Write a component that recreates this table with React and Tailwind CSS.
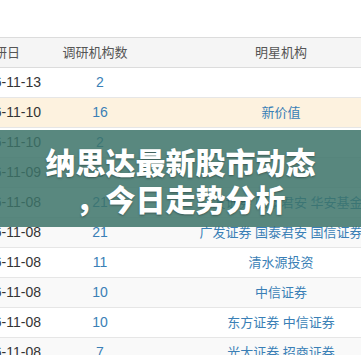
export default function App() {
  const rows = [
    { d: "2016-11-13", n: "2", s: "", bg: "bg-white" },
    { d: "2016-11-10", n: "16", s: "新价值", bg: "bg-[#fdf2df]" },
    { d: "2016-11-10", n: "2", s: "", bg: "bg-white" },
    { d: "2016-11-09", n: "3", s: "", bg: "bg-[#f9f9f9]" },
    { d: "2016-11-08", n: "21", s: "广发证券 国泰君安 华安基金", bg: "bg-white" },
    { d: "2016-11-08", n: "21", s: "广发证券 国泰君安 国信证券", bg: "bg-[#f9f9f9]" },
    { d: "2016-11-08", n: "11", s: "清水源投资", bg: "bg-white" },
    { d: "2016-11-08", n: "10", s: "中信证券", bg: "bg-[#f9f9f9]" },
    { d: "2016-11-08", n: "10", s: "东方证券 中信证券", bg: "bg-white" },
    { d: "2016-11-08", n: "7", s: "光大证券 招商证券", bg: "bg-[#f9f9f9]" },
  ];
  return (
    <div className="relative w-[361px] h-[361px] overflow-hidden bg-white font-['Liberation_Sans','Noto_Sans_CJK_SC',sans-serif] text-[13px]">
      <div className="h-[355px] overflow-hidden pt-[37px]">
        <div className="flex flex-col w-[482px] ml-[-60px]">
          <div className="flex h-[31px] items-center bg-[#f5f5f5] border-t border-b border-[#dcdcdc] text-[#555]">
            <div className="w-[115px] pr-[35px] text-right whitespace-nowrap">调研日</div>
            <div className="w-[85px] text-center whitespace-nowrap pr-[5px]">调研机构数</div>
            <div className="w-[282px] text-center whitespace-nowrap">明星机构</div>
          </div>
          {rows.map((r, i) => (
            <div key={i} className={`flex h-[30px] items-center border-b border-[#e6e6e6] ${r.bg}`}>
              <div className="w-[115px] pr-[14px] text-right whitespace-nowrap text-[#333] text-[14px]">{r.d}</div>
              <div className="w-[85px] text-center whitespace-nowrap text-[#3a7fb6] text-[14px] pl-[5px]">{r.n}</div>
              <div className="w-[282px] text-center whitespace-nowrap text-[#3a7fb6]">{r.s}</div>
            </div>
          ))}
        </div>
      </div>
      <div className="absolute left-0 right-0 top-[130px] h-[97px] bg-[rgba(60,115,105,0.85)] flex flex-col items-center justify-center pt-[3px]">
        <div className="text-center text-white font-black text-[30px] leading-[37px] whitespace-nowrap font-['Noto_Sans_CJK_SC',sans-serif] [text-shadow:0_1px_2px_rgba(0,0,0,0.35)]">
          纳思达最新股市动态
        </div>
        <div className="text-center text-white font-black text-[30px] leading-[37px] whitespace-nowrap font-['Noto_Sans_CJK_SC',sans-serif] [text-shadow:0_1px_2px_rgba(0,0,0,0.35)]">
          ，今日走势分析
        </div>
      </div>
    </div>
  );
}
